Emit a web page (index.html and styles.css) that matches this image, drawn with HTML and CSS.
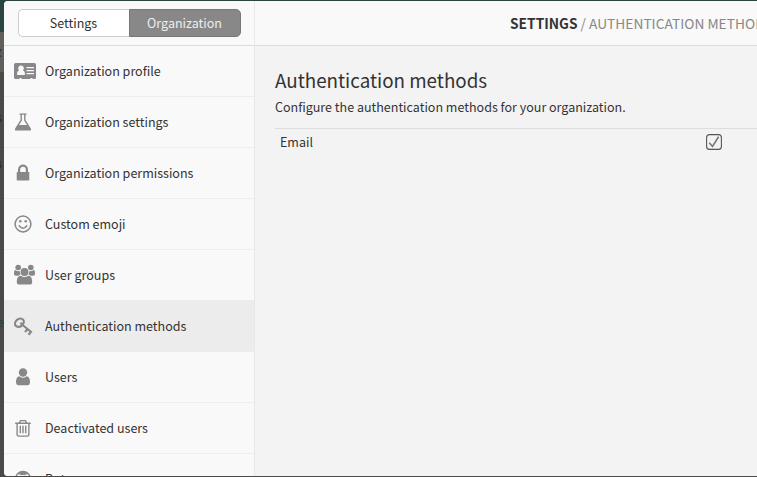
FILE: index.html
```html
<!DOCTYPE html>
<html lang="en">
<head>
<meta charset="utf-8">
<title>Authentication methods</title>
<link rel="stylesheet" href="styles.css">
</head>
<body>
<div class="backdrop" aria-hidden="true">
  <span class="hint h1">z</span><span class="hint h2">s</span><span class="hint h3">s</span><span class="hint h4">re</span>
</div>
<div class="overlay">
  <aside class="sidebar">
    <div class="tabs-bar"><div class="tabs"><button class="tab">Settings</button><button class="tab selected">Organization</button></div></div>
    <ul class="nav">
      <li><svg class="icon" viewBox="0 0 24 24"><path fill-rule="evenodd" d="M1.500 3h19a1.500 1.500 0 0 1 1.500 1.500v13a1.500 1.500 0 0 1-1.500 1.500h-2v-1h-2v1H7.500v-1h-2v1h-4A1.500 1.500 0 0 1 0 17.500v-13A1.500 1.500 0 0 1 1.500 3zM6.800 5.500a2.600 2.900 0 0 0-1.800 5C3.600 11 3 12.300 3 14.200q0 .8.800.8h6.400q.8 0 .8-.8c0-1.900-.6-3.200-2-3.700A2.600 2.900 0 0 0 6.800 5.500zM12.500 7v1.300H20V7zM12.500 10v1.300H20V10zM12.500 13v1.300H20V13z"/></svg><span>Organization profile</span></li>
      <li><svg class="icon" viewBox="0 0 24 24"><path fill-rule="evenodd" d="M5.500 2.500h7v1.300h-1V9l5.200 8.200c.9 1.500.2 2.300-1 2.300H2.300c-1.200 0-1.900-.8-1-2.300L6.500 9V3.800h-1zM7.900 3.800v5.600L5 14h8l-2.900-4.600V3.800z"/></svg><span>Organization settings</span></li>
      <li><svg class="icon" viewBox="0 0 24 24"><path fill-rule="evenodd" d="M4 10V7.500a5 5 0 0 1 10 0V10h.5q.8 0 .8.800v6.900q0 .8-.8.800h-11q-.8 0-.8-.800v-6.900q0-.8.8-.800zM6.200 10h5.600V7.500a2.800 2.800 0 0 0-5.600 0z"/></svg><span>Organization permissions</span></li>
      <li><svg class="icon" viewBox="0 0 24 24"><g fill="none" stroke="currentColor" stroke-width="1.500" stroke-linecap="round"><circle cx="9" cy="11" r="7.900"/><path d="M5.200 12.800q3.800 5 7.600 0"/></g><circle cx="6.300" cy="8.300" r="1.250"/><circle cx="11.700" cy="8.300" r="1.250"/></svg><span>Custom emoji</span></li>
      <li><svg class="icon" viewBox="0 0 24 24"><circle cx="4.200" cy="3.500" r="2.800"/><circle cx="16.800" cy="3.500" r="2.800"/><path d="M1.200 6C.2 6 0 8 0 10q0 1.800 1.800 1.800h2.500q1-1 2.200-1.300-.8-1.300-.7-3.200-2.200.2-4.600-1.300zM19.800 6c1 0 1.200 2 1.200 4q0 1.800-1.800 1.800h-2.500q-1-1-2.200-1.300.8-1.300.7-3.200 2.200.2 4.600-1.300z"/><circle cx="10.500" cy="8" r="4"/><path d="M6.800 11.700q3.700 2.500 7.400 0c2.800 0 4 2.500 4 6.200q0 2.700-2.700 2.700h-10q-2.700 0-2.700-2.700c0-3.700 1.200-6.200 4-6.200z"/></svg><span>User groups</span></li>
      <li class="active"><svg class="icon" viewBox="0 0 24 24"><g fill="none" stroke="currentColor" stroke-width="2.200"><ellipse cx="5.400" cy="7.700" rx="4.800" ry="3.700" transform="rotate(-40 5.400 7.700)"/><path d="M8 9.500l9.800 8M13.700 14l-2.700 3M17 16.700l-2.500 3"/></g><circle cx="7.200" cy="8.500" r="1.200"/></svg><span>Authentication methods</span></li>
      <li><svg class="icon" viewBox="0 0 24 24"><circle cx="9" cy="6.500" r="4.200"/><path d="M5.400 10.300q3.600 3 7.200 0c2.400.2 3.400 2.500 3.400 5.500q0 3.500-2.700 3.500H4.700Q2 19.300 2 15.800c0-3 1-5.300 3.400-5.500z"/></svg><span>Users</span></li>
      <li><svg class="icon" viewBox="0 0 24 24"><path fill="none" stroke="currentColor" stroke-width="1.400" d="M1.200 6.300h15.600M5.500 6.100l1-2.500h5l1 2.500M3.100 6.300V17.100q0 2 1.600 2h8.600q1.600 0 1.600-2V6.300M6.300 8.800v7.500M9 8.800v7.500M11.700 8.800v7.500"/></svg><span>Deactivated users</span></li>
      <li><svg class="icon" viewBox="0 0 24 24"><path fill-rule="evenodd" d="M9 2.700a8 8 0 1 1 0 16 8 8 0 0 1 0-16zM4.300 6.200Q2.500 7.700 2.500 11.700q0 4 6.500 4t6.500-4q0-4-1.800-5.500-2 0-3 1-1.700-.3-3.400 0-1-1-3-1z"/></svg><span>Bots</span></li>
    </ul>
  </aside>
  <main class="content">
    <header class="heading"><strong>SETTINGS</strong> / AUTHENTICATION METHODS</header>
    <section class="panel">
      <h1>Authentication methods</h1>
      <p>Configure the authentication methods for your organization.</p>
      <div class="method"><span>Email</span><svg class="check" viewBox="0 0 16 16"><rect x=".6" y=".6" width="14.800" height="14.800" rx="3" fill="none" stroke="#555" stroke-width="1.100"/><path d="M3.300 8.700l3.200 3.800 6.100-9.700" fill="none" stroke="#777" stroke-width="1.600"/></svg></div>
    </section>
  </main>
</div>
</body>
</html>
```
FILE: styles.css
```css
* { box-sizing: border-box; }
body {
  margin: 0;
  height: 477px;
  overflow: hidden;
  padding: 1px 0 1px 4px;
  background: linear-gradient(#294441 0 32px, #625e5a 32px 72px, #4c4a48 72px);
  font: 12.53px/20px "Noto Sans CJK SC", sans-serif;
  color: #333;
}
.backdrop { position: absolute; left: 0; top: 0; width: 4px; height: 477px; overflow: hidden; }
.hint { position: absolute; right: 2px; color: #292929; font-size: 13px; }
.h1 { top: 42px; color: #303b65; font-weight: bold; }
.h2 { top: 107px; }
.h3 { top: 153px; }
.h4 { top: 312px; right: 0; color: #23404b; }
.overlay {
  position: relative;
  display: grid;
  grid-template-columns: 251px 1fr;
  height: 475px;
  overflow: hidden;
  border-radius: 4px 0 0 4px;
  background: #f3f3f3;
}
.sidebar { background: #f9f9f9; border-right: 1px solid #e8e8e8; overflow: hidden; }
.tabs-bar { height: 45px; padding: 8px 14px; border-bottom: 1px solid #ddd; }
.tabs { display: flex; width: 223px; height: 28px; }
.tab {
  flex: 1 1 0;
  padding: 0 1px 0 0;
  border: 1px solid #ccc;
  border-right: 0;
  border-radius: 5px 0 0 5px;
  background: #fff;
  color: #333;
  font: inherit;
}
.tab.selected { border: 1px solid #777; border-radius: 0 5px 5px 0; background: #888; color: #eee; }
.nav { list-style: none; margin: 0; padding: 0; }
.nav li {
  display: flex;
  align-items: center;
  height: 51px;
  padding-left: 10px;
  border-bottom: 1px solid #eee;
}
.nav .active { background: #ececec; }
.icon { width: 24px; height: 24px; margin: 2px 7px 0 0; fill: #888; color: #888; }
.content { min-width: 0; overflow: hidden; }
.heading {
  height: 45px;
  padding: 12px 0 0 255px;
  border-bottom: 1px solid #ddd;
  background: #f9f9f9;
  color: #888;
  font-size: 13.75px;
  white-space: nowrap;
}
.heading strong { color: #333; }
.panel { padding: 19px 0 0 20px; }
h1 { margin: 0; font-size: 18.8px; line-height: 30px; font-weight: 400; }
p { margin: 2px 0 11px; }
.method {
  display: flex;
  justify-content: space-between;
  align-items: center;
  height: 27px;
  padding: 0 35px 0 5px;
  border-top: 1px solid #ddd;
}
.check { width: 16px; height: 16px; }
```
